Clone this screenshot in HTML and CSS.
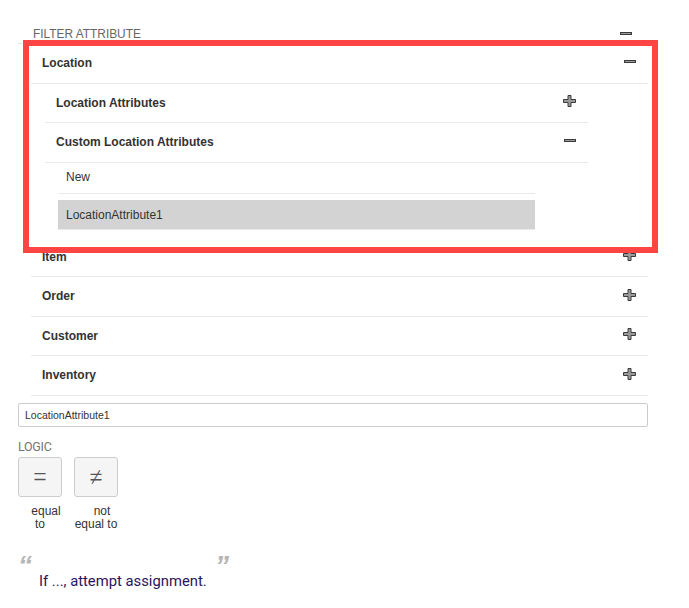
FILE: index.html
```html
<!DOCTYPE html>
<html>
<head>
<meta charset="utf-8">
<link rel="stylesheet" href="styles.css">
</head>
<body>
<div class="page">
  <div class="section-head">
    <span>FILTER ATTRIBUTE</span>
    <svg class="ic ic-minus" width="12" height="3" viewBox="0 0 12 3"><rect x="0.5" y="0.5" width="11" height="2" fill="#9a9a9a" stroke="#3a3a3a"/></svg>
  </div>
  <div class="panel">
    <div class="tree">
      <div class="row">
        <span>Location</span>
        <svg class="ic ic-minus" width="12" height="3" viewBox="0 0 12 3"><rect x="0.5" y="0.5" width="11" height="2" fill="#9a9a9a" stroke="#3a3a3a"/></svg>
      </div>
      <div class="sub">
        <div class="row">
          <span>Location Attributes</span>
          <svg class="ic ic-plus" width="13" height="12" viewBox="0 0 13 12"><path d="M5 0.5H8V4.5H12.5V7.5H8V11.5H5V7.5H0.5V4.5H5Z" fill="#9a9a9a" stroke="#3a3a3a"/></svg>
        </div>
        <div class="row">
          <span>Custom Location Attributes</span>
          <svg class="ic ic-minus" width="12" height="3" viewBox="0 0 12 3"><rect x="0.5" y="0.5" width="11" height="2" fill="#9a9a9a" stroke="#3a3a3a"/></svg>
        </div>
        <div class="sub3">
          <div class="leaf">New</div>
          <div class="leaf selected">LocationAttribute1</div>
        </div>
      </div>
      <div class="row">
        <span>Item</span>
        <svg class="ic ic-plus" width="13" height="12" viewBox="0 0 13 12"><path d="M5 0.5H8V4.5H12.5V7.5H8V11.5H5V7.5H0.5V4.5H5Z" fill="#9a9a9a" stroke="#3a3a3a"/></svg>
      </div>
      <div class="row">
        <span>Order</span>
        <svg class="ic ic-plus" width="13" height="12" viewBox="0 0 13 12"><path d="M5 0.5H8V4.5H12.5V7.5H8V11.5H5V7.5H0.5V4.5H5Z" fill="#9a9a9a" stroke="#3a3a3a"/></svg>
      </div>
      <div class="row">
        <span>Customer</span>
        <svg class="ic ic-plus" width="13" height="12" viewBox="0 0 13 12"><path d="M5 0.5H8V4.5H12.5V7.5H8V11.5H5V7.5H0.5V4.5H5Z" fill="#9a9a9a" stroke="#3a3a3a"/></svg>
      </div>
      <div class="row">
        <span>Inventory</span>
        <svg class="ic ic-plus" width="13" height="12" viewBox="0 0 13 12"><path d="M5 0.5H8V4.5H12.5V7.5H8V11.5H5V7.5H0.5V4.5H5Z" fill="#9a9a9a" stroke="#3a3a3a"/></svg>
      </div>
    </div>
  </div>
  <input class="value-input" type="text" value="LocationAttribute1">
  <div class="logic-label">LOGIC</div>
  <div class="logic">
    <div class="logic-col">
      <div class="logic-btn">=</div>
      <div class="logic-text">equal<br>to</div>
    </div>
    <div class="logic-col">
      <div class="logic-btn">&ne;</div>
      <div class="logic-text">not<br>equal to</div>
    </div>
  </div>
  <div class="quote">
    <div class="quote-marks"><span>&ldquo;</span><span>&rdquo;</span></div>
    <div class="quote-text">If ..., attempt assignment.</div>
  </div>
  <div class="highlight"></div>
</div>
</body>
</html>
```

FILE: styles.css
```css
html, body {
  margin: 0;
  padding: 0;
  background: #fff;
}
body {
  font-family: "Liberation Sans", Arial, sans-serif;
  color: #333;
}
.page {
  position: relative;
  padding: 24px 41px 0 18px;
}
.section-head {
  display: flex;
  justify-content: space-between;
  align-items: center;
  height: 19px;
  padding: 0 16px 0 15px;
  font-size: 11.9px;
  color: #666;
}
.ic {
  display: block;
  flex: none;
}
.row .ic {
  margin-bottom: 4px;
}
.panel {
  border-top: 1px solid #e6e6e6;
}
.tree {
  margin-left: 13px;
}
.row {
  display: flex;
  justify-content: space-between;
  align-items: center;
  padding: 10px 12px 10px 11px;
  line-height: 18.5px;
  font-size: 12px;
  font-weight: bold;
  border-bottom: 1px solid #e9e9e9;
}
.sub {
  margin: 0 60px 0 14px;
}
.sub3 {
  margin: 0 53px 0 13px;
  padding-bottom: 7.6px;
}
.leaf {
  padding: 5px 8px 7px;
  line-height: 18.4px;
  font-size: 12px;
  border-bottom: 1px solid #e9e9e9;
}
.leaf.selected {
  margin-top: 6.4px;
  padding: 6px 8px 5px;
  line-height: 18px;
  background: #d3d3d3;
}
.value-input {
  display: block;
  box-sizing: border-box;
  width: 100%;
  height: 24px;
  margin: 7px 0 0;
  padding: 0 6px;
  border: 1px solid #ccc;
  border-radius: 2px;
  font-family: "Liberation Sans", Arial, sans-serif;
  font-size: 10.5px;
  color: #333;
  outline: none;
}
.logic-label {
  margin-top: 13px;
  line-height: 14px;
  font-family: Roboto, "Liberation Sans", sans-serif;
  font-size: 12.5px;
  letter-spacing: -0.3px;
  color: #757575;
}
.logic {
  display: flex;
  gap: 12px;
  margin-top: 3px;
}
.logic-col {
  width: 44px;
}
.logic-btn {
  box-sizing: border-box;
  height: 40px;
  border: 1px solid #ccc;
  border-radius: 3px;
  background: #f5f5f5;
  display: flex;
  align-items: center;
  justify-content: center;
  font-family: Roboto, "Liberation Sans", sans-serif;
  font-size: 27px;
  font-weight: 300;
  color: #555;
}
.logic-text {
  margin-top: 8.5px;
  width: 44px;
  text-align: center;
  text-indent: 12px;
  white-space: nowrap;
  font-size: 12px;
  line-height: 12.5px;
  color: #333;
}
.quote {
  margin-top: 30px;
}
.quote-marks {
  display: flex;
  justify-content: space-between;
  width: 211px;
  height: 12px;
  line-height: 12px;
  font-size: 28px;
  font-weight: bold;
  font-style: italic;
  color: #b5b5b5;
}
.quote-text {
  padding-left: 21px;
  line-height: 18px;
  font-family: Roboto, "Liberation Sans", sans-serif;
  font-size: 14.8px;
  color: #2c135e;
}
.highlight {
  position: absolute;
  left: 23px;
  top: 40px;
  width: 635px;
  height: 213px;
  box-sizing: border-box;
  border: 6px solid #ff4444;
  pointer-events: none;
}
```
